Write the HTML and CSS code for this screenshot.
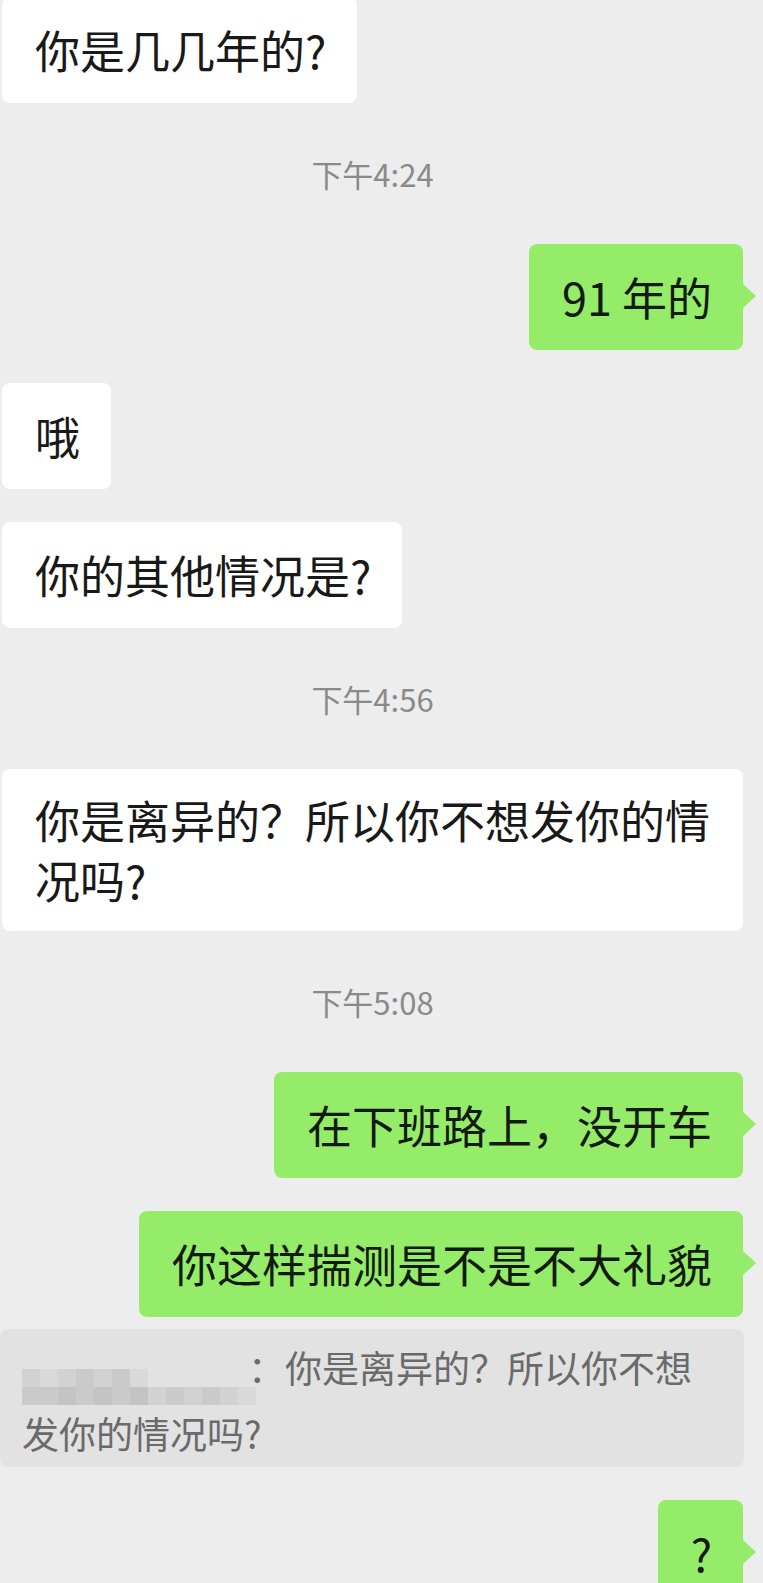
FILE: index.html
```html
<!DOCTYPE html>
<html lang="zh-CN">
<head>
<meta charset="utf-8">
<title>聊天</title>
<link rel="stylesheet" href="styles.css">
</head>
<body>
<div class="chat">
  <div class="row left first"><div class="bubble white">你是几几年的?</div></div>
  <div class="time">下午4:24</div>
  <div class="row right"><div class="bubble green">91 年的</div></div>
  <div class="row left"><div class="bubble white">哦</div></div>
  <div class="row left"><div class="bubble white">你的其他情况是?</div></div>
  <div class="time">下午4:56</div>
  <div class="row left"><div class="bubble white">你是离异的？所以你不想发你的情况吗?</div></div>
  <div class="time">下午5:08</div>
  <div class="row right"><div class="bubble green">在下班路上，没开车</div></div>
  <div class="row right"><div class="bubble green">你这样揣测是不是不大礼貌</div></div>
  <div class="quote"><span class="mosaic"><i class="m2"></i><i class="m1"></i><i class="m2"></i><i class="m3"></i><i class="m2"></i><i class="m3"></i><i class="m1"></i><i class="m0"></i><i class="m0"></i><i class="m0"></i><i class="m0"></i><i class="m0"></i><i class="m0"></i><i class="m3"></i><i class="m3"></i><i class="m4"></i><i class="m3"></i><i class="m4"></i><i class="m3"></i><i class="m4"></i><i class="m2"></i><i class="m3"></i><i class="m2"></i><i class="m3"></i><i class="m2"></i><i class="m1"></i></span>：你是离异的？所以你不想发你的情况吗?</div>
  <div class="row right"><div class="bubble green">?</div></div>
</div>
</body>
</html>
```
FILE: styles.css
```css
html, body {
  margin: 0;
  padding: 0;
  background: #ededed;
  overflow: hidden;
}
body {
  width: 763px;
  height: 1583px;
  font-family: "Noto Sans CJK SC", "Noto Sans", sans-serif;
}
.chat {
  margin: 0 20px 0 2px;
  display: flex;
  flex-direction: column;
}
.row {
  display: flex;
  margin-top: 33px;
}
.row.first {
  margin-top: -3px;
}
.row.left { justify-content: flex-start; }
.row.right { justify-content: flex-end; }
.bubble {
  position: relative;
  box-sizing: border-box;
  min-height: 106px;
  max-width: 741px;
  display: flex;
  align-items: center;
  padding: 21px 31px 21px 33px;
  border-radius: 8px;
  font-size: 45px;
  line-height: 60px;
  color: #191919;
}
.bubble.white { background: #ffffff; }
.bubble.green { background: #95ec69; color: #111a0c; }
.bubble.green::after {
  content: "";
  position: absolute;
  right: -13px;
  top: 40px;
  border-left: 13px solid #95ec69;
  border-top: 12px solid transparent;
  border-bottom: 12px solid transparent;
}
.time {
  margin-top: 33px;
  height: 75px;
  line-height: 75px;
  text-align: center;
  font-size: 31px;
  color: #8a8a8a;
}
.quote {
  margin: 12px -1px 0 -2px;
  padding: 10px 22px 6px 22px;
  background: #e2e2e2;
  border-radius: 8px;
  font-size: 37px;
  line-height: 56px;
  color: #6a6a6a;
}
.mosaic {
  display: inline-grid;
  grid-template-columns: repeat(13, 18px);
  grid-template-rows: 18px 18px;
  width: 234px;
  height: 36px;
  vertical-align: -4px;
  margin-right: -8px;
}
.mosaic i { display: block; }
.mosaic .m0 { background: transparent; }
.mosaic .m1 { background: #d9d9d9; }
.mosaic .m2 { background: #d2d2d2; }
.mosaic .m3 { background: #cacaca; }
.mosaic .m4 { background: #c4c4c4; }
```
